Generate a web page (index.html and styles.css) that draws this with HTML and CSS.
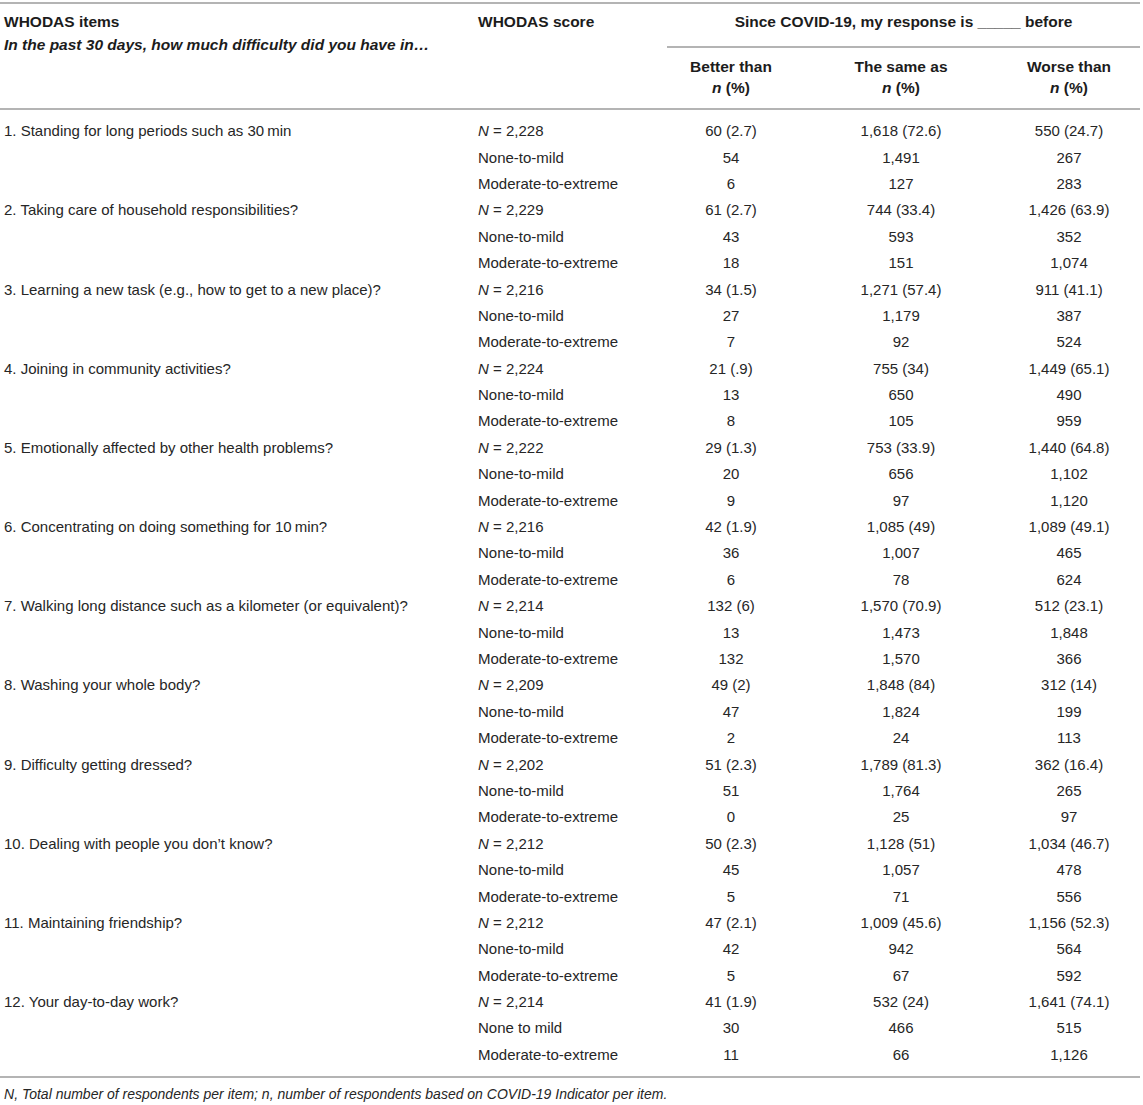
FILE: index.html
```html
<!DOCTYPE html>
<html lang="en">
<head>
<meta charset="utf-8">
<title>WHODAS items since COVID-19</title>
<link rel="stylesheet" href="styles.css">
</head>
<body>
<div class="wrap">
<table class="tbl">
  <colgroup>
    <col class="c-item">
    <col class="c-score">
    <col class="c-better">
    <col class="c-same">
    <col class="c-worse">
  </colgroup>
  <thead>
    <tr class="h1">
      <th rowspan="2" class="th-item"><div class="ln">WHODAS items</div><div class="ln it">In the past 30 days, how much difficulty did you have in…</div></th>
      <th rowspan="2" class="th-score"><div class="ln">WHODAS score</div></th>
      <th colspan="3" class="th-span">Since COVID-19, my response is _____ before</th>
    </tr>
    <tr class="h2">
      <th class="th-sub">Better than<br><i>n</i> (%)</th>
      <th class="th-sub">The same as<br><i>n</i> (%)</th>
      <th class="th-sub last">Worse than<br><i>n</i> (%)</th>
    </tr>
  </thead>
  <tbody>
    <tr class="first"><td>1. Standing for long periods such as 30&#8201;min</td><td><i>N</i> = 2,228</td><td class="n">60 (2.7)</td><td class="n">1,618 (72.6)</td><td class="n last">550 (24.7)</td></tr>
    <tr><td></td><td>None-to-mild</td><td class="n">54</td><td class="n">1,491</td><td class="n last">267</td></tr>
    <tr><td></td><td>Moderate-to-extreme</td><td class="n">6</td><td class="n">127</td><td class="n last">283</td></tr>

    <tr><td>2. Taking care of household responsibilities?</td><td><i>N</i> = 2,229</td><td class="n">61 (2.7)</td><td class="n">744 (33.4)</td><td class="n last">1,426 (63.9)</td></tr>
    <tr><td></td><td>None-to-mild</td><td class="n">43</td><td class="n">593</td><td class="n last">352</td></tr>
    <tr><td></td><td>Moderate-to-extreme</td><td class="n">18</td><td class="n">151</td><td class="n last">1,074</td></tr>

    <tr><td>3. Learning a new task (e.g., how to get to a new place)?</td><td><i>N</i> = 2,216</td><td class="n">34 (1.5)</td><td class="n">1,271 (57.4)</td><td class="n last">911 (41.1)</td></tr>
    <tr><td></td><td>None-to-mild</td><td class="n">27</td><td class="n">1,179</td><td class="n last">387</td></tr>
    <tr><td></td><td>Moderate-to-extreme</td><td class="n">7</td><td class="n">92</td><td class="n last">524</td></tr>

    <tr><td>4. Joining in community activities?</td><td><i>N</i> = 2,224</td><td class="n">21 (.9)</td><td class="n">755 (34)</td><td class="n last">1,449 (65.1)</td></tr>
    <tr><td></td><td>None-to-mild</td><td class="n">13</td><td class="n">650</td><td class="n last">490</td></tr>
    <tr><td></td><td>Moderate-to-extreme</td><td class="n">8</td><td class="n">105</td><td class="n last">959</td></tr>

    <tr><td>5. Emotionally affected by other health problems?</td><td><i>N</i> = 2,222</td><td class="n">29 (1.3)</td><td class="n">753 (33.9)</td><td class="n last">1,440 (64.8)</td></tr>
    <tr><td></td><td>None-to-mild</td><td class="n">20</td><td class="n">656</td><td class="n last">1,102</td></tr>
    <tr><td></td><td>Moderate-to-extreme</td><td class="n">9</td><td class="n">97</td><td class="n last">1,120</td></tr>

    <tr><td>6. Concentrating on doing something for 10&#8201;min?</td><td><i>N</i> = 2,216</td><td class="n">42 (1.9)</td><td class="n">1,085 (49)</td><td class="n last">1,089 (49.1)</td></tr>
    <tr><td></td><td>None-to-mild</td><td class="n">36</td><td class="n">1,007</td><td class="n last">465</td></tr>
    <tr><td></td><td>Moderate-to-extreme</td><td class="n">6</td><td class="n">78</td><td class="n last">624</td></tr>

    <tr><td>7. Walking long distance such as a kilometer (or equivalent)?</td><td><i>N</i> = 2,214</td><td class="n">132 (6)</td><td class="n">1,570 (70.9)</td><td class="n last">512 (23.1)</td></tr>
    <tr><td></td><td>None-to-mild</td><td class="n">13</td><td class="n">1,473</td><td class="n last">1,848</td></tr>
    <tr><td></td><td>Moderate-to-extreme</td><td class="n">132</td><td class="n">1,570</td><td class="n last">366</td></tr>

    <tr><td>8. Washing your whole body?</td><td><i>N</i> = 2,209</td><td class="n">49 (2)</td><td class="n">1,848 (84)</td><td class="n last">312 (14)</td></tr>
    <tr><td></td><td>None-to-mild</td><td class="n">47</td><td class="n">1,824</td><td class="n last">199</td></tr>
    <tr><td></td><td>Moderate-to-extreme</td><td class="n">2</td><td class="n">24</td><td class="n last">113</td></tr>

    <tr><td>9. Difficulty getting dressed?</td><td><i>N</i> = 2,202</td><td class="n">51 (2.3)</td><td class="n">1,789 (81.3)</td><td class="n last">362 (16.4)</td></tr>
    <tr><td></td><td>None-to-mild</td><td class="n">51</td><td class="n">1,764</td><td class="n last">265</td></tr>
    <tr><td></td><td>Moderate-to-extreme</td><td class="n">0</td><td class="n">25</td><td class="n last">97</td></tr>

    <tr><td>10. Dealing with people you don’t know?</td><td><i>N</i> = 2,212</td><td class="n">50 (2.3)</td><td class="n">1,128 (51)</td><td class="n last">1,034 (46.7)</td></tr>
    <tr><td></td><td>None-to-mild</td><td class="n">45</td><td class="n">1,057</td><td class="n last">478</td></tr>
    <tr><td></td><td>Moderate-to-extreme</td><td class="n">5</td><td class="n">71</td><td class="n last">556</td></tr>

    <tr><td>11. Maintaining friendship?</td><td><i>N</i> = 2,212</td><td class="n">47 (2.1)</td><td class="n">1,009 (45.6)</td><td class="n last">1,156 (52.3)</td></tr>
    <tr><td></td><td>None-to-mild</td><td class="n">42</td><td class="n">942</td><td class="n last">564</td></tr>
    <tr><td></td><td>Moderate-to-extreme</td><td class="n">5</td><td class="n">67</td><td class="n last">592</td></tr>

    <tr><td>12. Your day-to-day work?</td><td><i>N</i> = 2,214</td><td class="n">41 (1.9)</td><td class="n">532 (24)</td><td class="n last">1,641 (74.1)</td></tr>
    <tr><td></td><td>None to mild</td><td class="n">30</td><td class="n">466</td><td class="n last">515</td></tr>
    <tr class="final"><td></td><td>Moderate-to-extreme</td><td class="n">11</td><td class="n">66</td><td class="n last">1,126</td></tr>
  </tbody>
</table>
<p class="note"><i>N</i>, Total number of respondents per item; <i>n</i>, number of respondents based on COVID-19 Indicator per item.</p>
</div>
</body>
</html>
```

FILE: styles.css
```css
html, body {
  margin: 0;
  padding: 0;
  background: #ffffff;
}

body {
  font-family: "Liberation Sans", Arial, Helvetica, sans-serif;
  color: #262626;
  font-size: 15px;
}

.wrap {
  width: 1140px;
  padding-top: 2px;
}

.tbl {
  width: 1140px;
  border-collapse: collapse;
  table-layout: fixed;
  border-top: 2px solid #b4b4b4;
  border-bottom: 2px solid #b4b4b4;
}

.c-item { width: 474px; }
.c-score { width: 193px; }
.c-better { width: 128px; }
.c-same { width: 212px; }
.c-worse { width: 133px; }

thead th {
  font-weight: bold;
  font-size: 15.5px;
  color: #1c1c1c;
  vertical-align: top;
  padding: 0 4px;
  line-height: 23px;
}

.th-item,
.th-score {
  text-align: left;
  padding-top: 6px;
  border-bottom: 2px solid #b4b4b4;
}

.th-item .it {
  font-style: italic;
}

.th-span {
  text-align: center;
  padding-top: 6px;
  padding-bottom: 13px;
  border-bottom: 2px solid #b4b4b4;
}

.th-sub {
  text-align: center;
  vertical-align: middle;
  line-height: 21px;
  padding-top: 8px;
  padding-bottom: 10px;
  border-bottom: 2px solid #b4b4b4;
}

.th-sub i {
  font-weight: bold;
}

.th-sub.last,
td.last {
  padding-right: 13px;
}

tbody td {
  height: 26.4px;
  padding: 0 4px;
  line-height: 18px;
  vertical-align: middle;
  text-align: left;
  white-space: nowrap;
}

tbody td.n {
  text-align: center;
}

tbody tr.first td {
  padding-top: 8px;
}

tbody tr.final td {
  padding-bottom: 8px;
}

.note {
  margin: 0;
  padding: 7px 4px 0;
  font-size: 14px;
  line-height: 18px;
  font-style: italic;
}
```
